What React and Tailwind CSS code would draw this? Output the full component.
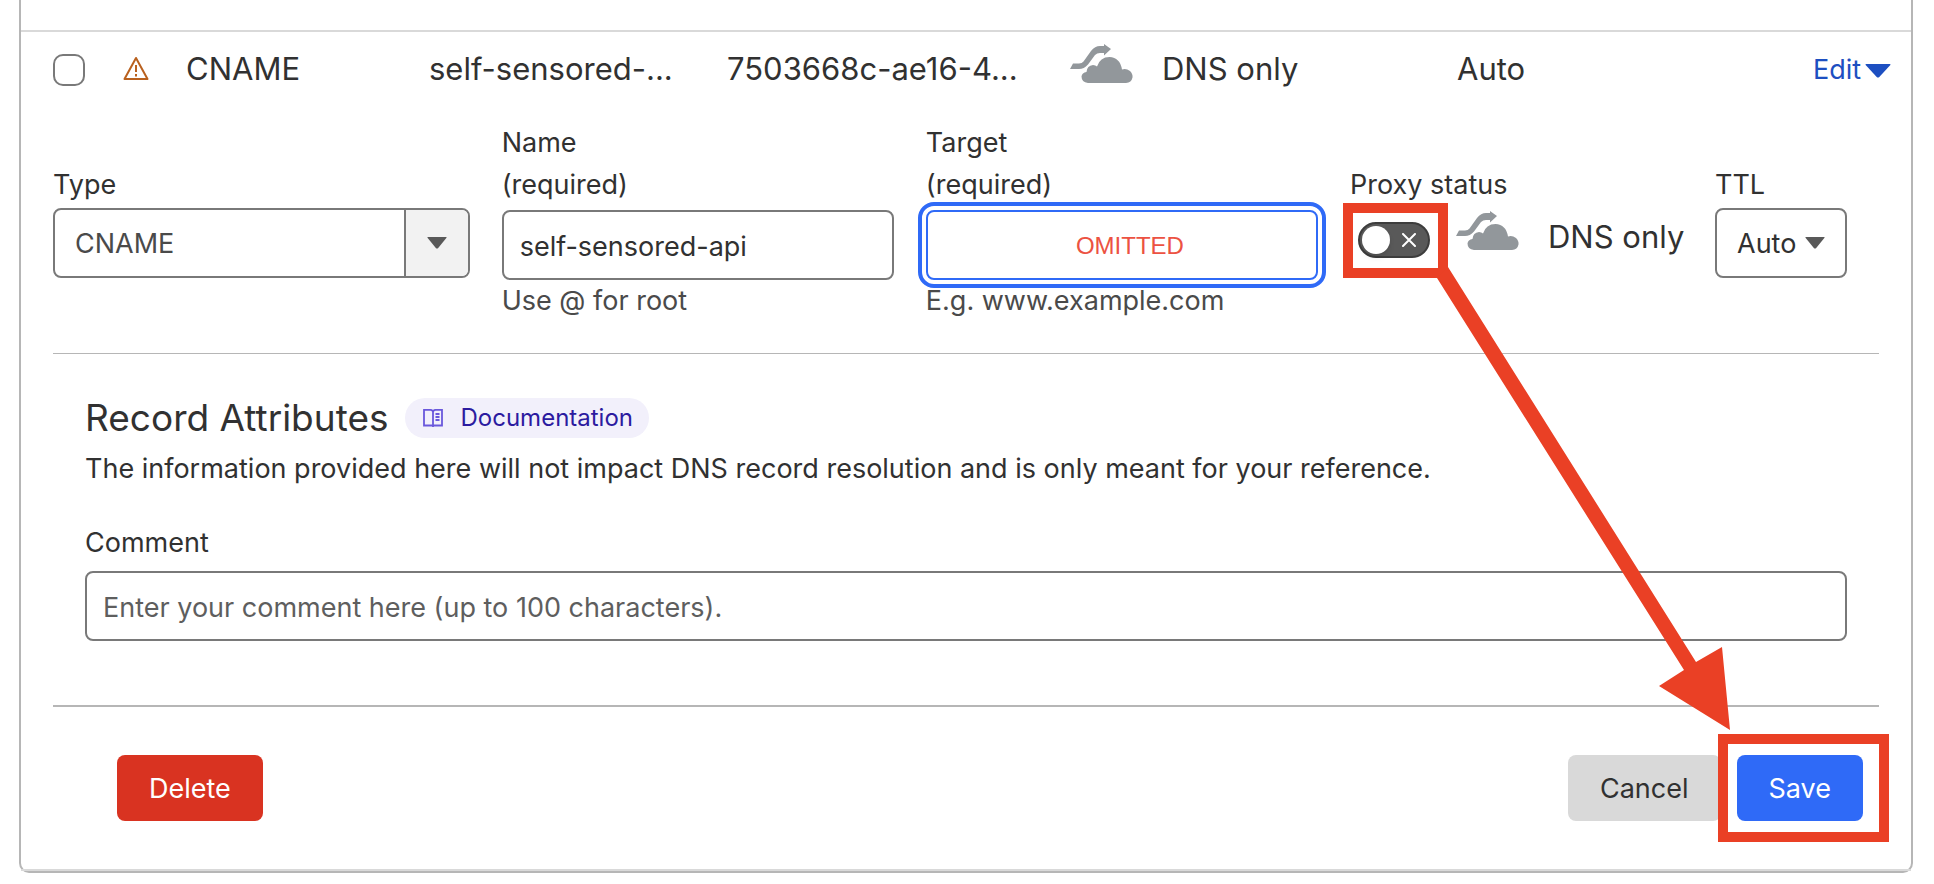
import React, { useState } from 'react';

const CloudIcon = () => (
  <svg viewBox="0 0 64 40" className="-mt-3 w-16 h-10 shrink-0" fill="#92979b" aria-hidden="true">
    <path d="M0 25 L3 19.500 H9 Q12 19.500 13.500 17.500 L21 7 Q25 2 30 2 H34 V0 L41 5 L34 11.500 V9 H30 Q27 9 25 11 L18 20.500 Q14 25 9 25 Z" />
    <path d="M18 39 Q11.500 38 11.500 32.500 Q12 28.500 16.500 28 Q17 21.500 23 21 Q25.500 21 27 22.500 Q30 13 39.500 13 Q50 13.500 52 25.500 Q56 24 60 27 Q63 30 62.500 33.500 Q61.500 38.500 56 39 Z" />
  </svg>
);

const WarningIcon = () => (
  <svg viewBox="0 0 26 25" className="mb-0.5 w-[26px] h-[25px]" fill="none" stroke="#b9611f" strokeWidth="2" strokeLinejoin="round">
    <path d="M13 2 L24.500 23 H1.500 Z" />
    <path d="M13 9 V16 M13 18 V20.500" />
  </svg>
);

const BookIcon = () => (
  <svg viewBox="0 0 20 20" className="w-5 h-5" fill="none" stroke="#6a58dc" strokeWidth="1.8">
    <path d="M10 17.500 H1 V1.800 H7.500 Q10 2 10 4 Q10 2 12.500 1.800 H19 V17.500 Z M10 4 V19" />
    <path d="M12.500 6 H16.500 M12.500 9 H16.500 M12.500 12 H16.500" />
  </svg>
);

const Triangle = ({ className }) => (
  <svg viewBox="0 0 20 14" preserveAspectRatio="none" className={className} fill="currentColor" aria-hidden="true">
    <path d="M1 0 H19 Q20 0 19.500 1 L11 13 Q10 14 9 13 L0.500 1 Q0 0 1 0 Z" />
  </svg>
);

const Field = ({ id, label, children }) => (
  <div className="min-w-0">
    <label htmlFor={id} className="flex h-[84px] items-end leading-[42px] whitespace-pre-line">
      {label}
    </label>
    {children}
  </div>
);

const App = () => {
  const [selected, setSelected] = useState(false);
  const [type, setType] = useState('CNAME');
  const [name, setName] = useState('self-sensored-api');
  const [target, setTarget] = useState('OMITTED');
  const [proxied, setProxied] = useState(false);
  const [ttl, setTtl] = useState('Auto');
  const [comment, setComment] = useState('');

  return (
    <div className="bg-white pl-[19px] pr-[21px] pb-3 font-['Inter',sans-serif] text-[27px] text-[#313131]">
      <div className="relative border-2 border-t-0 border-[#b6b6b6] rounded-b-[10px] pt-[30px]">
        {/* Record row */}
        <table className="w-full table-fixed border-t-2 border-[#d9d9d9] text-[31px]">
          <colgroup>
            <col className="w-[102px]" />
            <col className="w-[63px]" />
            <col className="w-[243px]" />
            <col className="w-[298px]" />
            <col className="w-[343px]" />
            <col className="w-[387px]" />
            <col />
            <col className="w-[98px]" />
          </colgroup>
          <tbody>
            <tr className="h-[76px]">
              <td className="pl-8">
                <input
                  type="checkbox"
                  aria-label="Select record"
                  checked={selected}
                  onChange={() => setSelected(!selected)}
                  className="block size-8 appearance-none rounded-[10px] border-2 border-[#797979] checked:bg-[#2f6af7]"
                />
              </td>
              <td><WarningIcon /></td>
              <td>CNAME</td>
              <td>self-sensored-...</td>
              <td>7503668c-ae16-4...</td>
              <td>
                <div className="flex items-center gap-7">
                  <CloudIcon />
                  <span>DNS only</span>
                </div>
              </td>
              <td>Auto</td>
              <td>
                <button type="button" className="flex items-center gap-1 pt-0.5 text-[27px] text-[#1d4fc1]">
                  Edit
                  <Triangle className="w-[26px] h-[14px] shrink-0" />
                </button>
              </td>
            </tr>
          </tbody>
        </table>

        {/* Edit form */}
        <form onSubmit={(e) => e.preventDefault()} className="mx-8 mt-[15px]">
          <div className="grid grid-cols-[17fr_16fr_16fr_333px_132px] gap-x-8 pr-8">
            <Field id="type" label="Type">
              <div className="relative mt-0.5">
                <select
                  id="type"
                  value={type}
                  onChange={(e) => setType(e.target.value)}
                  className="h-[70px] w-full appearance-none rounded-lg border-2 border-[#797979] pt-0.5 pl-5 text-[#4a4a4a]"
                >
                  <option>CNAME</option>
                  <option>A</option>
                </select>
                <span className="pointer-events-none absolute inset-y-[2px] right-[2px] flex w-16 items-center justify-center rounded-r-md border-l-2 border-[#797979] bg-[#f2f2f2] text-[#595959]">
                  <Triangle className="w-5 h-3" />
                </span>
              </div>
            </Field>

            <Field id="name" label={'Name\n(required)'}>
              <input
                id="name"
                value={name}
                onChange={(e) => setName(e.target.value)}
                className="mt-1 block h-[70px] w-full rounded-lg border-2 border-[#797979] px-4 pt-0.5"
              />
              <p className="leading-[42px] text-[#4a4a4a]">Use @ for root</p>
            </Field>

            <Field id="target" label={'Target\n(required)'}>
              <input
                id="target"
                value={target}
                onChange={(e) => setTarget(e.target.value)}
                className="mt-1 block h-[70px] w-full rounded-lg border-2 border-[#2f6af7] pt-0.5 pl-8 pr-4 text-center font-['Liberation_Sans',sans-serif] text-2xl text-[#ec5242] outline-4 outline-offset-4 outline-[#2f6af7]"
              />
              <p className="leading-[42px] text-[#4a4a4a]">E.g. www.example.com</p>
            </Field>

            <Field id="proxy" label="Proxy status">
              <div className="flex items-center pl-2 pt-2">
                <div className="relative h-9 w-[72px] shrink-0">
                  <input
                    id="proxy"
                    type="checkbox"
                    role="switch"
                    checked={proxied}
                    onChange={() => setProxied(!proxied)}
                    className="block h-9 w-[72px] appearance-none rounded-full border-2 border-[#3d3d3d] bg-[#595959]"
                  />
                  <span className="pointer-events-none absolute left-1 top-1 size-7 rounded-full bg-white shadow-md" />
                  <svg viewBox="0 0 14 14" className="pointer-events-none absolute right-[14px] top-[11px] size-[14px]" stroke="#fff" strokeWidth="2" strokeLinecap="round">
                    <path d="M1 1 L13 13 M13 1 L1 13" />
                  </svg>
                  <span className="pointer-events-none absolute -left-[15px] -right-[18px] -top-[19px] -bottom-5 border-10 border-[#ea4025]" />
                </div>
                <span className="mb-1.5 ml-[26px] flex items-center gap-7 text-[31px] leading-[46px] whitespace-nowrap">
                  <CloudIcon />
                  DNS only
                </span>
              </div>
            </Field>

            <Field id="ttl" label="TTL">
              <div className="relative mt-0.5">
                <select
                  id="ttl"
                  value={ttl}
                  onChange={(e) => setTtl(e.target.value)}
                  className="h-[70px] w-full appearance-none rounded-lg border-2 border-[#797979] pt-0.5 pl-5"
                >
                  <option>Auto</option>
                  <option>1 min</option>
                </select>
                <span className="pointer-events-none absolute inset-y-0 right-[22px] flex items-center text-[#595959]">
                  <Triangle className="w-5 h-3" />
                </span>
              </div>
            </Field>
          </div>

          <section className="mt-[31px] border-t border-b-2 border-[#b6b6b6] px-8 pt-9 pb-16">
            <div className="mb-0.5 flex items-center gap-4">
              <h2 className="text-[37px] leading-[56px]">Record Attributes</h2>
              <a href="#docs" className="flex h-10 items-center gap-[18px] rounded-full bg-[#f2f0fb] pl-[18px] pr-4 text-2xl text-[#2c1ba0]">
                <BookIcon />
                Documentation
              </a>
            </div>
            <p className="leading-[42px]">
              The information provided here will not impact DNS record resolution and is only meant for your reference.
            </p>
            <label htmlFor="comment" className="mt-8 block leading-[42px]">Comment</label>
            <input
              id="comment"
              value={comment}
              onChange={(e) => setComment(e.target.value)}
              placeholder="Enter your comment here (up to 100 characters)."
              className="mt-[7px] block h-[70px] w-full rounded-lg border-2 border-[#797979] px-4 pt-0.5 placeholder:text-[#5e5e5e]"
            />
          </section>

          <div className="flex gap-4 pt-12 pb-12 pl-16 pr-4">
            <button type="button" className="mr-auto h-[66px] rounded-lg bg-[#d93321] px-8 pt-0.5 text-white">Delete</button>
            <button type="button" className="h-[66px] rounded-lg bg-[#d9d9d9] px-8 pt-0.5">Cancel</button>
            <div className="relative">
              <button type="submit" className="h-[66px] rounded-lg bg-[#2f6af7] px-8 pt-0.5 text-white">Save</button>
              <span className="pointer-events-none absolute -left-[19px] -right-[26px] -top-[21px] -bottom-[21px] border-10 border-[#ea4025]" />
            </div>
          </div>
        </form>
        <div className="h-[2px] bg-[#d9d9d9]" />

        {/* Arrow from the proxy switch to the save button */}
        <svg viewBox="0 0 294 464" className="pointer-events-none absolute right-[180px] top-[267px] h-[464px] w-[294px]" fill="#ea4025">
          <path d="M0 11 L11 0 L259 395 L285 380 L293 463 L222 419 L247 403 Z" />
        </svg>
      </div>
    </div>
  );
};

export default App;
